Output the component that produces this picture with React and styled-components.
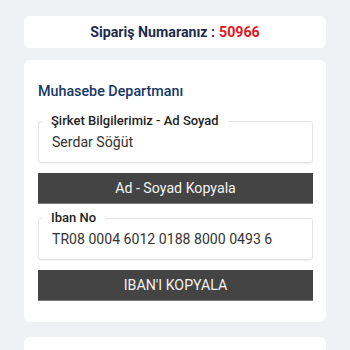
import React from "react";
import styled, { createGlobalStyle } from "styled-components";

const Global = createGlobalStyle`
  html, body { margin: 0; padding: 0; background: #eff1f5; }
  body { font-family: Roboto, "Noto Sans", Arial, sans-serif; }
  * { box-sizing: border-box; }
`;

const Page = styled.div`
  display: flex;
  flex-direction: column;
  padding: 16px 24px 0;
  height: 350px;
  overflow: hidden;
`;

const Card = styled.div`
  background: #fff;
  border-radius: 6px;
  padding: ${(p) => p.$pad || "0"};
  margin-top: ${(p) => p.$mt || "0"};
  flex-shrink: 0;
`;

const OrderCard = styled(Card)`
  height: 32px;
  display: flex;
  align-items: center;
  justify-content: center;
  font-weight: 700;
  font-size: 14.2px;
  color: #1d2c4d;
`;

const Red = styled.span`
  color: #e3161e;
  margin-left: 4px;
`;

const Title = styled.h3`
  margin: 0 0 11px;
  font-size: 14.3px;
  font-weight: 500;
  color: #15386a;
  line-height: 22px;
`;

const Field = styled.fieldset`
  margin: ${(p) => p.$mt || "0"} 0 0;
  padding: 0 3px 8px;
  border: 1px solid #e4e4e4;
  border-radius: 3px;
  box-shadow: 0 1px 2px rgba(0, 0, 0, 0.06);
  min-width: 0;
`;

const Legend = styled.legend`
  padding: 0 9px;
  font-size: 13px;
  font-weight: 500;
  color: #222;
  line-height: 16px;
`;

const Value = styled.div`
  margin: 0 ${(p) => p.$clip || "0"} 0 0;
  padding: 1px 0 0 10px;
  font-size: 14.1px;
  color: #333;
  line-height: 24px;
  height: 25px;
  white-space: nowrap;
  overflow: hidden;
`;

const Button = styled.button`
  display: block;
  width: 100%;
  height: 31px;
  margin: 10px 0 0;
  padding: 0;
  border: none;
  border-bottom: 1px solid #7a7a7a;
  background: #444444;
  color: #f2f2f2;
  font-family: Roboto, Arial, sans-serif;
  font-size: 14.2px;
  cursor: pointer;
`;

export default function App() {
  return (
    <>
      <Global />
      <Page>
        <OrderCard>
          Sipariş Numaranız :<Red>50966</Red>
        </OrderCard>
        <Card $mt="12px" $pad="20px 13px 21px 14px">
          <Title>Muhasebe Departmanı</Title>
          <Field>
            <Legend>Şirket Bilgilerimiz - Ad Soyad</Legend>
            <Value>Serdar Söğüt</Value>
          </Field>
          <Button>Ad - Soyad Kopyala</Button>
          <Field $mt="6px">
            <Legend>Iban No</Legend>
            <Value $clip="37px">TR08 0004 6012 0188 8000 0493 60</Value>
          </Field>
          <Button>IBAN'I KOPYALA</Button>
        </Card>
        <Card $mt="15px" $pad="20px">&nbsp;</Card>
      </Page>
    </>
  );
}
